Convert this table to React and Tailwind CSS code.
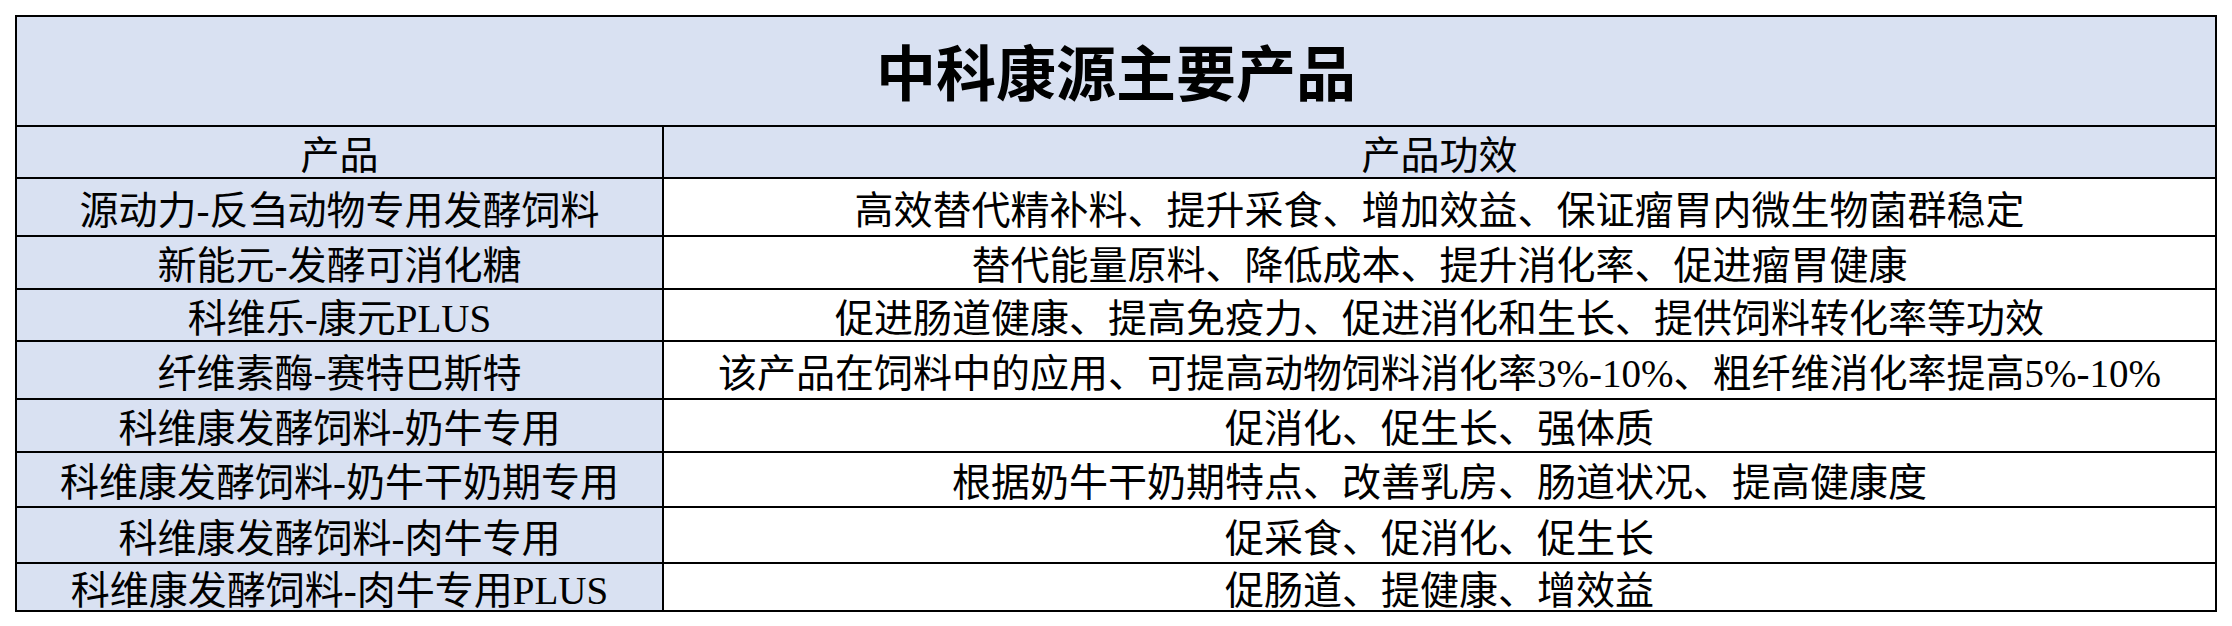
const rows = [
  { name: '源动力-反刍动物专用发酵饲料', effect: '高效替代精补料、提升采食、增加效益、保证瘤胃内微生物菌群稳定', h: 'h-[58px]' },
  { name: '新能元-发酵可消化糖', effect: '替代能量原料、降低成本、提升消化率、促进瘤胃健康', h: 'h-[53px]' },
  { name: '科维乐-康元PLUS', effect: '促进肠道健康、提高免疫力、促进消化和生长、提供饲料转化率等功效', h: 'h-[52px]' },
  { name: '纤维素酶-赛特巴斯特', effect: '该产品在饲料中的应用、可提高动物饲料消化率3%-10%、粗纤维消化率提高5%-10%', h: 'h-[58px]' },
  { name: '科维康发酵饲料-奶牛专用', effect: '促消化、促生长、强体质', h: 'h-[53px]' },
  { name: '科维康发酵饲料-奶牛干奶期专用', effect: '根据奶牛干奶期特点、改善乳房、肠道状况、提高健康度', h: 'h-[55px]' },
  { name: '科维康发酵饲料-肉牛专用', effect: '促采食、促消化、促生长', h: 'h-[56px]' },
  { name: '科维康发酵饲料-肉牛专用PLUS', effect: '促肠道、提健康、增效益', h: 'h-[48px]' },
];

export default function App() {
  return (
    <div className="min-h-screen bg-white pt-[15px] pl-[15px] text-black font-['Liberation_Serif','Noto_Sans_CJK_SC',serif]">
      <div className="w-[2202px] border-2 border-black">
        {/* 标题 */}
        <div className="h-[108px] bg-[#d9e1f2] flex items-center justify-center text-[60px] font-bold leading-none pt-[10px]">
          中科康源主要产品
        </div>

        {/* 表头 */}
        <div className="flex h-[52px] border-t-2 border-black bg-[#d9e1f2] text-[39px] leading-none">
          <div className="w-[647px] shrink-0 border-r-2 border-black flex items-center justify-center pt-[6px]">产品</div>
          <div className="flex-1 flex items-center justify-center pt-[6px]">产品功效</div>
        </div>

        {rows.map((r) => (
          <div key={r.name} className={`flex border-t-2 border-black text-[39px] leading-none ${r.h}`}>
            <div className="w-[647px] shrink-0 border-r-2 border-black bg-[#d9e1f2] flex items-center justify-center whitespace-nowrap pt-[6px]">
              {r.name}
            </div>
            <div className="flex-1 bg-white flex items-center justify-center whitespace-nowrap pt-[6px]">
              {r.effect}
            </div>
          </div>
        ))}
      </div>
    </div>
  );
}
